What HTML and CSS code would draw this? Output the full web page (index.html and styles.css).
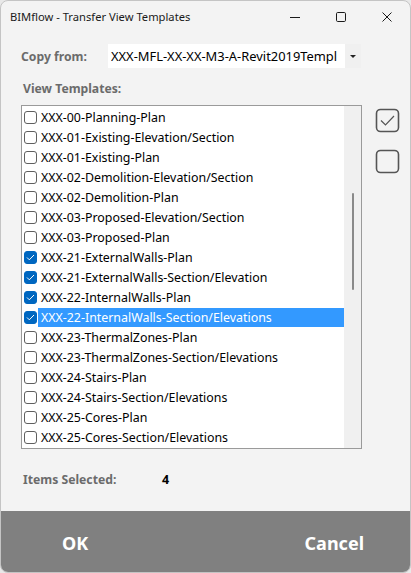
FILE: index.html
```html
<!DOCTYPE html>
<html>
<head>
<meta charset="utf-8">
<title>BIMflow - Transfer View Templates</title>
<link rel="stylesheet" href="styles.css">
</head>
<body>
<div class="window">
  <div class="titlebar">
    <span class="title">BIMflow - Transfer View Templates</span>
    <div class="controls">
      <span class="ctl"><svg width="12" height="12" viewBox="0 0 12 12"><path d="M1 6.5h10" stroke="#1a1a1a" stroke-width="1"/></svg></span>
      <span class="ctl"><svg width="12" height="12" viewBox="0 0 12 12"><rect x="1.5" y="1.5" width="9" height="9" rx="1.2" fill="none" stroke="#1a1a1a" stroke-width="1"/></svg></span>
      <span class="ctl"><svg width="12" height="12" viewBox="0 0 12 12"><path d="M1.5 1.5l9 9M10.5 1.5l-9 9" stroke="#1a1a1a" stroke-width="1"/></svg></span>
    </div>
  </div>
  <div class="content">
    <div class="copy-row">
      <span class="label">Copy from:</span>
      <div class="combo">
        <span class="combo-text">XXX-MFL-XX-XX-M3-A-Revit2019Templ</span>
        <span class="combo-btn"><svg width="6" height="3" viewBox="0 0 6 3"><path d="M0 0h6L3 3z" fill="#222"/></svg></span>
      </div>
    </div>
    <div class="label vt-label">View Templates:</div>
    <div class="list-area">
      <div class="listbox">
        <div class="items">
          <div class="item"><span class="cb"></span><span class="txt">XXX-00-Planning-Plan</span></div>
          <div class="item"><span class="cb"></span><span class="txt">XXX-01-Existing-Elevation/Section</span></div>
          <div class="item"><span class="cb"></span><span class="txt">XXX-01-Existing-Plan</span></div>
          <div class="item"><span class="cb"></span><span class="txt">XXX-02-Demolition-Elevation/Section</span></div>
          <div class="item"><span class="cb"></span><span class="txt">XXX-02-Demolition-Plan</span></div>
          <div class="item"><span class="cb"></span><span class="txt">XXX-03-Proposed-Elevation/Section</span></div>
          <div class="item"><span class="cb"></span><span class="txt">XXX-03-Proposed-Plan</span></div>
          <div class="item"><span class="cb checked"><svg width="9" height="7" viewBox="0 0 9 7"><path d="M1 3.5l2.3 2.3L8 1" fill="none" stroke="#fff" stroke-width="1"/></svg></span><span class="txt">XXX-21-ExternalWalls-Plan</span></div>
          <div class="item"><span class="cb checked"><svg width="9" height="7" viewBox="0 0 9 7"><path d="M1 3.5l2.3 2.3L8 1" fill="none" stroke="#fff" stroke-width="1"/></svg></span><span class="txt">XXX-21-ExternalWalls-Section/Elevation</span></div>
          <div class="item"><span class="cb checked"><svg width="9" height="7" viewBox="0 0 9 7"><path d="M1 3.5l2.3 2.3L8 1" fill="none" stroke="#fff" stroke-width="1"/></svg></span><span class="txt">XXX-22-InternalWalls-Plan</span></div>
          <div class="item selected"><span class="cb checked"><svg width="9" height="7" viewBox="0 0 9 7"><path d="M1 3.5l2.3 2.3L8 1" fill="none" stroke="#fff" stroke-width="1"/></svg></span><span class="txt">XXX-22-InternalWalls-Section/Elevations</span></div>
          <div class="item"><span class="cb"></span><span class="txt">XXX-23-ThermalZones-Plan</span></div>
          <div class="item"><span class="cb"></span><span class="txt">XXX-23-ThermalZones-Section/Elevations</span></div>
          <div class="item"><span class="cb"></span><span class="txt">XXX-24-Stairs-Plan</span></div>
          <div class="item"><span class="cb"></span><span class="txt">XXX-24-Stairs-Section/Elevations</span></div>
          <div class="item"><span class="cb"></span><span class="txt">XXX-25-Cores-Plan</span></div>
          <div class="item"><span class="cb"></span><span class="txt">XXX-25-Cores-Section/Elevations</span></div>
        </div>
        <div class="scrollbar"><div class="thumb"></div></div>
      </div>
      <div class="side-tools">
        <svg class="tool" width="25" height="25" viewBox="0 0 25 25"><rect x="1.5" y="1.5" width="22" height="22" rx="4" fill="none" stroke="#555" stroke-width="1.6"/><path d="M6 12.5l4.5 4.5L19 8" fill="none" stroke="#555" stroke-width="1.2"/></svg>
        <svg class="tool" width="25" height="25" viewBox="0 0 25 25"><rect x="1.5" y="1.5" width="22" height="22" rx="4" fill="none" stroke="#555" stroke-width="1.6"/></svg>
      </div>
    </div>
    <div class="selected-row">
      <span class="label">Items Selected:</span>
      <span class="count">4</span>
    </div>
  </div>
  <div class="footer">
    <span class="btn ok">OK</span>
    <span class="btn cancel">Cancel</span>
  </div>
</div>
</body>
</html>
```
FILE: styles.css
```css
* { box-sizing: border-box; }
html, body {
  margin: 0;
  padding: 0;
  background: #e8e8e8;
}
body {
  font-family: "Noto Sans", "Open Sans", sans-serif;
  font-size: 12px;
  color: #000;
}
.window {
  width: 411px;
  height: 573px;
  background: #f3f3f3;
  border: 1px solid #c4c4c4;
  border-radius: 8px;
  overflow: hidden;
  display: flex;
  flex-direction: column;
}
.titlebar {
  height: 31px;
  display: flex;
  align-items: center;
  justify-content: space-between;
  padding-left: 9px;
  flex-shrink: 0;
}
.title {
  font-size: 11.2px;
  color: #1a1a1a;
}
.controls {
  display: flex;
  align-items: center;
}
.ctl {
  width: 46px;
  height: 31px;
  display: flex;
  align-items: center;
  justify-content: center;
}
.content {
  flex: 1;
  padding: 12px 0 0 20px;
  display: flex;
  flex-direction: column;
}
.label {
  font-weight: bold;
  color: #6b6b6b;
  font-size: 12.2px;
}
.copy-row {
  display: flex;
  align-items: center;
  height: 24px;
}
.copy-row .label {
  width: 87px;
}
.combo {
  width: 253px;
  height: 24px;
  background: #fff;
  display: flex;
  align-items: center;
  padding-left: 3px;
}
.combo-text {
  flex: 1;
  overflow: hidden;
  white-space: nowrap;
  font-size: 12.9px;
}
.combo-btn {
  width: 16px;
  height: 24px;
  background: #f0f0f0;
  display: flex;
  align-items: center;
  justify-content: center;
  flex-shrink: 0;
}
.vt-label {
  margin-top: 12px;
  margin-left: 2px;
  height: 18px;
  line-height: 18px;
}
.list-area {
  margin-top: 7px;
  display: flex;
  align-items: flex-start;
}
.listbox {
  width: 341px;
  height: 344px;
  border: 1px solid #9a9a9a;
  background: #fff;
  display: flex;
}
.items {
  flex: 1;
  display: flex;
  flex-direction: column;
  padding-top: 1px;
}
.item {
  height: 20px;
  display: flex;
  align-items: center;
  padding-left: 2px;
  white-space: nowrap;
  overflow: hidden;
}
.cb {
  width: 13px;
  height: 13px;
  border: 1px solid #5f5f5f;
  border-radius: 3px;
  background: #fff;
  flex-shrink: 0;
  display: flex;
  align-items: center;
  justify-content: center;
}
.cb.checked {
  background: #0067c0;
  border-color: #0067c0;
}
.txt {
  flex: 1;
  height: 19px;
  line-height: 19px;
  margin-left: 1px;
  padding-left: 3px;
  overflow: hidden;
  font-size: 12.4px;
}
.item.selected .txt {
  background: #3399ff;
  color: #fff;
}
.scrollbar {
  width: 17px;
  background: #f0f0f0;
  display: flex;
  justify-content: center;
  padding-top: 87px;
}
.thumb {
  width: 2px;
  height: 97px;
  background: #8a8a8a;
  border-radius: 1px;
}
.side-tools {
  margin-left: 13px;
  margin-top: 3px;
  display: flex;
  flex-direction: column;
  gap: 16px;
}
.tool {
  display: block;
}
.selected-row {
  margin-top: 21px;
  margin-left: 2px;
  display: flex;
  align-items: center;
  height: 18px;
}
.selected-row .label {
  width: 139px;
}
.count {
  font-weight: bold;
  font-size: 12.5px;
}
.footer {
  height: 61px;
  flex-shrink: 0;
  background: #808080;
  display: flex;
  align-items: center;
  justify-content: space-between;
  padding: 2px 46px 0 61px;
}
.btn {
  color: #fff;
  font-weight: bold;
  font-size: 18px;
}
```
